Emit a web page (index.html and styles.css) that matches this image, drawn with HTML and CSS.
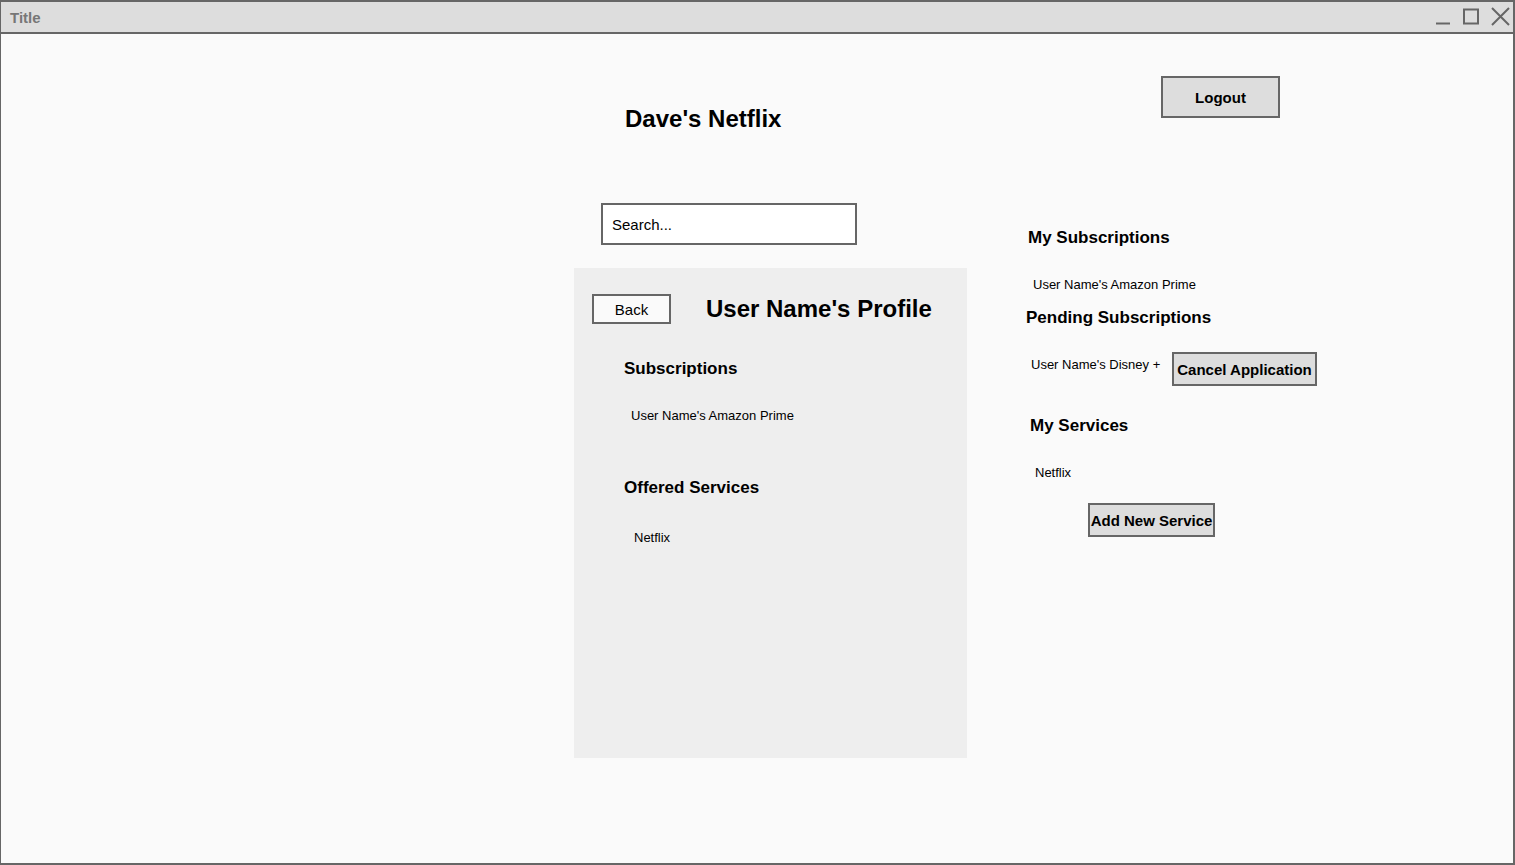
FILE: index.html
```html
<!DOCTYPE html>
<html>
<head>
  <link rel="stylesheet" href="styles.css">
</head>
<body>
  <div class="window">
    <div class="titlebar">
      <span class="title">Title</span>
      <div class="controls">
        <svg width="18" height="18" viewBox="0 0 18 18"><path d="M2 15.5h14" stroke="#666" stroke-width="2" fill="none"/></svg>
        <svg width="18" height="18" viewBox="0 0 18 18"><rect x="2" y="1.5" width="14" height="14" stroke="#666" stroke-width="2" fill="none"/></svg>
        <svg width="20" height="20" viewBox="0 0 20 20"><path d="M2 1L19 18M19 1L2 18" stroke="#666" stroke-width="2" fill="none"/></svg>
      </div>
    </div>
    <div class="content">
      <div class="left">
        <h1 class="site_name">Dave's Netflix</h1>
        <input class="search" type="text" placeholder="Search...">
        <div class="panel">
          <div class="panel_head">
            <button class="back">Back</button>
            <h1 class="profile_name">User Name's Profile</h1>
          </div>
          <h3 class="subs_head">Subscriptions</h3>
          <p class="subs_item">User Name's Amazon Prime</p>
          <h3 class="offered_head">Offered Services</h3>
          <p class="offered_item">Netflix</p>
        </div>
      </div>
      <div class="right">
        <button class="button logout">Logout</button>
        <h3 class="my_subs">My Subscriptions</h3>
        <p class="my_subs_item">User Name's Amazon Prime</p>
        <h3 class="pending">Pending Subscriptions</h3>
        <div class="pending_row">
          <p class="pending_item">User Name's Disney +</p>
          <button class="button cancel">Cancel Application</button>
        </div>
        <h3 class="my_services">My Services</h3>
        <p class="my_services_item">Netflix</p>
        <button class="button add">Add New Service</button>
      </div>
    </div>
  </div>
</body>
</html>
```

FILE: styles.css
```css
body {
  margin: 0;
  font-family: "Liberation Sans", Arial, sans-serif;
  background-color: #fafafa;
}
.window {
  width: 1515px;
  height: 865px;
  box-sizing: border-box;
  border: 2px solid #666;
  border-left-width: 1px;
  background-color: #fafafa;
  display: flex;
  flex-direction: column;
}
.titlebar {
  height: 30px;
  background-color: #ddd;
  border-bottom: 2px solid #666;
  display: flex;
  align-items: center;
  justify-content: space-between;
  padding: 0 3px 0 9px;
}
.title {
  color: #777;
  font-weight: bold;
  font-size: 15px;
}
.controls {
  display: flex;
  align-items: center;
  gap: 10px;
}
.controls svg {
  display: block;
}
.content {
  display: flex;
  padding-left: 573px;
}
h1, h3, p {
  margin: 0;
}
h1 {
  font-size: 24px;
  line-height: 28px;
}
h3 {
  font-size: 17px;
  line-height: 20px;
}
p {
  font-size: 13px;
  line-height: 16px;
}
.left {
  width: 393px;
  display: flex;
  flex-direction: column;
  align-items: flex-start;
}
.site_name {
  margin: 71px 0 0 51px;
}
.search {
  margin: 70px 0 0 27px;
  width: 256px;
  height: 42px;
  box-sizing: border-box;
  border: 2px solid #666;
  background-color: #fff;
  font-family: "Liberation Sans", Arial, sans-serif;
  font-size: 15px;
  padding: 0 9px;
  outline: none;
}
.search::placeholder {
  color: #000;
}
.panel {
  margin-top: 23px;
  width: 393px;
  height: 490px;
  background-color: #eee;
}
.panel_head {
  display: flex;
  align-items: center;
  margin-top: 26px;
}
.back {
  margin-left: 18px;
  width: 79px;
  height: 30px;
  border: 2px solid #666;
  background-color: #fafafa;
  font-family: "Liberation Sans", Arial, sans-serif;
  font-size: 15px;
  padding: 0;
}
.profile_name {
  margin-left: 35px;
}
.subs_head {
  margin: 35px 0 0 50px;
}
.subs_item {
  margin: 29px 0 0 57px;
}
.offered_head {
  margin: 54px 0 0 50px;
}
.offered_item {
  margin: 32px 0 0 60px;
}
.right {
  margin-left: 59px;
  display: flex;
  flex-direction: column;
  align-items: flex-start;
}
.button {
  border: 2px solid #666;
  background-color: #ddd;
  font-family: "Liberation Sans", Arial, sans-serif;
  font-weight: bold;
  font-size: 15px;
  padding: 0;
  color: #000;
}
.logout {
  margin: 42px 0 0 135px;
  width: 119px;
  height: 42px;
}
.my_subs {
  margin: 110px 0 0 2px;
}
.my_subs_item {
  margin: 29px 0 0 7px;
}
.pending {
  margin-top: 15px;
}
.pending_row {
  display: flex;
  align-items: flex-start;
  margin-top: 24px;
}
.pending_item {
  margin: 5px 0 0 5px;
  width: 141px;
}
.cancel {
  width: 145px;
  height: 34px;
}
.my_services {
  margin: 30px 0 0 4px;
}
.my_services_item {
  margin: 29px 0 0 9px;
}
.add {
  margin: 22px 0 0 62px;
  width: 127px;
  height: 34px;
}
```
